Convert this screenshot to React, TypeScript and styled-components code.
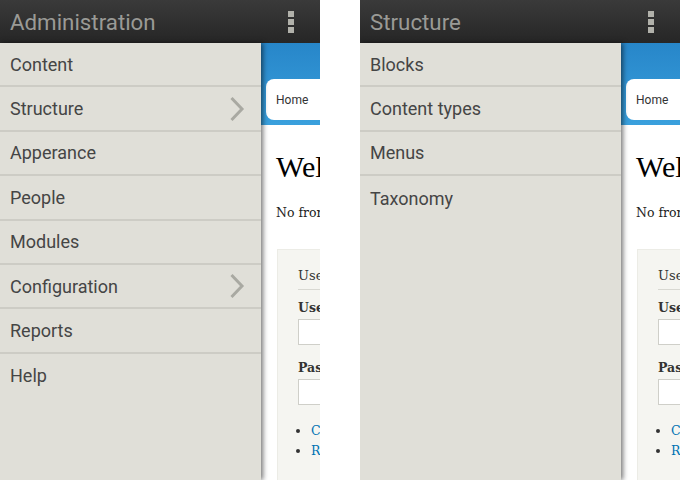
import React from "react";
import styled, { createGlobalStyle } from "styled-components";

const Global = createGlobalStyle`
  html, body { margin: 0; padding: 0; background: #ffffff; }
  * { box-sizing: border-box; }
`;

const Screens = styled.div`
  display: flex;
  gap: 40px;
  width: 680px;
  height: 480px;
  overflow: hidden;
`;

const Phone = styled.div`
  width: 320px;
  height: 480px;
  display: flex;
  flex-direction: column;
  overflow: hidden;
`;

const AppBar = styled.div`
  height: 43px;
  flex: none;
  display: flex;
  align-items: center;
  justify-content: space-between;
  padding: 0 26px 0 10px;
  background: linear-gradient(#3a3a3a, #262626);
`;

const Title = styled.div`
  font-family: Roboto, "Liberation Sans", sans-serif;
  font-size: 22.3px;
  color: #9a9a96;
  line-height: 1;
  margin-top: 1px;
`;

const Kebab = styled.div`
  display: flex;
  flex-direction: column;
  gap: 2px;
  margin-top: 1px;
`;

const Dot = styled.span`
  display: block;
  width: 6px;
  height: 6px;
  background: #b1b1aa;
`;

const Body = styled.div`
  flex: 1;
  display: flex;
  min-height: 0;
`;

const Drawer = styled.nav`
  width: 261px;
  flex: none;
  background: #e0dfd8;
  box-shadow: 2px 0 5px rgba(0, 0, 0, 0.55);
  position: relative;
  z-index: 1;
`;

const Item = styled.div`
  height: 44.4px;
  display: flex;
  align-items: center;
  justify-content: space-between;
  padding: 0 16px 0 10px;
  border-bottom: 2px solid #cdccc5;
  font-family: Roboto, "Liberation Sans", sans-serif;
  font-size: 18px;
  color: #454545;
  &:last-child { border-bottom: none; }
`;

const Label = styled.span`
  margin-top: 0;
`;

const Page = styled.div`
  flex: 1;
  min-width: 0;
  overflow: hidden;
  background: #ffffff;
`;

const PageInner = styled.div`
  width: 420px;
`;

const Banner = styled.div`
  background: linear-gradient(#2786c9, #3aa0dd);
  padding: 36px 0 5px 5px;
`;

const Crumb = styled.div`
  height: 41px;
  background: #ffffff;
  border-radius: 8px 0 0 8px;
  padding-left: 10px;
  display: flex;
  align-items: center;
  font-family: Roboto, "Liberation Sans", sans-serif;
  font-size: 12px;
  color: #333333;
`;

const Main = styled.div`
  padding: 0 15px;
  font-family: "DejaVu Serif", "Liberation Serif", serif;
  color: #222222;
`;

const Heading = styled.h1`
  margin: 25px 0 0;
  font-family: "Liberation Serif", serif;
  font-size: 30px;
  font-weight: normal;
  line-height: 34px;
  color: #000000;
`;

const Lead = styled.p`
  margin: 20px 0 0;
  font-size: 12.5px;
  line-height: 18px;
`;

const LoginBox = styled.div`
  margin: 27px 0 0 1px;
  background: #f5f5f1;
  border: 1px solid #ecece6;
  padding: 17px 20px 40px;
`;

const BoxTitle = styled.div`
  font-size: 13px;
  line-height: 18px;
  color: #333333;
  padding-bottom: 4px;
  border-bottom: 1px solid #d8d8d2;
`;

const FieldLabel = styled.div<{ $top: number }>`
  margin-top: ${(p) => p.$top}px;
  font-size: 12.5px;
  font-weight: bold;
  line-height: 16px;
  color: #333333;
`;

const Input = styled.div`
  margin-top: 3px;
  height: 26px;
  width: 300px;
  background: #ffffff;
  border: 1px solid #cfcfc9;
`;

const Links = styled.ul`
  margin: 16px 0 0;
  padding: 0 0 0 13px;
  font-size: 12.5px;
  line-height: 20px;
  color: #0071b3;
  li::marker { color: #333333; }
`;

function Chevron() {
  return (
    <svg width="16" height="26" viewBox="0 0 16 26">
      <polyline points="2.5,2 13,13 2.5,24" fill="none" stroke="#a9a9a2" strokeWidth="3" />
    </svg>
  );
}

type MenuItem = { label: string; sub?: boolean };

function Screen({ title, items }: { title: string; items: MenuItem[] }) {
  return (
    <Phone>
      <AppBar>
        <Title>{title}</Title>
        <Kebab>
          <Dot />
          <Dot />
          <Dot />
        </Kebab>
      </AppBar>
      <Body>
        <Drawer>
          {items.map((it) => (
            <Item key={it.label}>
              <Label>{it.label}</Label>
              {it.sub && <Chevron />}
            </Item>
          ))}
        </Drawer>
        <Page>
          <PageInner>
            <Banner>
              <Crumb>Home</Crumb>
            </Banner>
            <Main>
              <Heading>Welcome to Drupal</Heading>
              <Lead>No front page content has been created yet.</Lead>
              <LoginBox>
                <BoxTitle>User login</BoxTitle>
                <FieldLabel $top={10}>Username *</FieldLabel>
                <Input />
                <FieldLabel $top={15}>Password *</FieldLabel>
                <Input />
                <Links>
                  <li>Create new account</li>
                  <li>Request new password</li>
                </Links>
              </LoginBox>
            </Main>
          </PageInner>
        </Page>
      </Body>
    </Phone>
  );
}

export default function App() {
  return (
    <>
      <Global />
      <Screens>
        <Screen
          title="Administration"
          items={[
            { label: "Content" },
            { label: "Structure", sub: true },
            { label: "Apperance" },
            { label: "People" },
            { label: "Modules" },
            { label: "Configuration", sub: true },
            { label: "Reports" },
            { label: "Help" },
          ]}
        />
        <Screen
          title="Structure"
          items={[
            { label: "Blocks" },
            { label: "Content types" },
            { label: "Menus" },
            { label: "Taxonomy" },
          ]}
        />
      </Screens>
    </>
  );
}
